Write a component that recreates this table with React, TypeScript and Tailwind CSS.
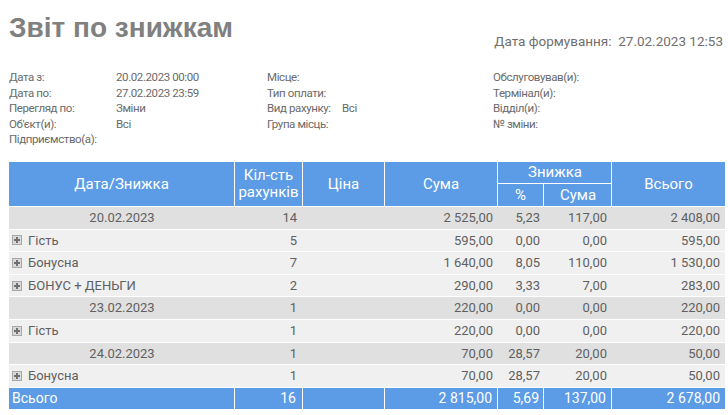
import React from "react";

const font = { fontFamily: "Roboto, 'Liberation Sans', sans-serif" };

function Plus() {
  return (
    <span className="inline-flex w-[10px] h-[10px] border border-[#a8a8a8] bg-[#d8d8d8] items-center justify-center mr-[6px] relative">
      <span className="absolute w-[6px] h-[2px] bg-[#707070]" />
      <span className="absolute w-[2px] h-[6px] bg-[#707070]" />
    </span>
  );
}

type Row = { g: boolean; name: string; n: string; s: string; p: string; d: string; t: string };

const rows: Row[] = [
  { g: true, name: "20.02.2023", n: "14", s: "2 525,00", p: "5,23", d: "117,00", t: "2 408,00" },
  { g: false, name: "Гість", n: "5", s: "595,00", p: "0,00", d: "0,00", t: "595,00" },
  { g: false, name: "Бонусна", n: "7", s: "1 640,00", p: "8,05", d: "110,00", t: "1 530,00" },
  { g: false, name: "БОНУС + ДЕНЬГИ", n: "2", s: "290,00", p: "3,33", d: "7,00", t: "283,00" },
  { g: true, name: "23.02.2023", n: "1", s: "220,00", p: "0,00", d: "0,00", t: "220,00" },
  { g: false, name: "Гість", n: "1", s: "220,00", p: "0,00", d: "0,00", t: "220,00" },
  { g: true, name: "24.02.2023", n: "1", s: "70,00", p: "28,57", d: "20,00", t: "50,00" },
  { g: false, name: "Бонусна", n: "1", s: "70,00", p: "28,57", d: "20,00", t: "50,00" },
];

const cols = "grid grid-cols-[226px_68px_82px_113px_46px_68px_113px]";

function Info({ l, v, lw }: { l: string; v?: string; lw: string }) {
  return (
    <div className="flex h-[15.5px] items-center">
      <span className={lw}>{l}</span>
      {v && <span>{v}</span>}
    </div>
  );
}

export default function App() {
  return (
    <div className="w-[728px] h-[415px] bg-white overflow-hidden relative" style={font}>
      <div className="flex justify-between items-end pl-[9px] pr-[5px] pt-[9px]">
        <div
          className="text-[28px] font-bold text-[#808080] leading-[38px]"
          style={{ fontFamily: "'Liberation Sans', Arial, sans-serif" }}
        >
          Звіт по знижкам
        </div>
        <div className="text-[13.5px] text-[#6f6f6f] leading-[18px] mb-[-3px]">
          Дата формування:&nbsp; 27.02.2023 12:53
        </div>
      </div>
      <div className="flex pl-[9px] pt-[23px] text-[11.5px] text-[#6a6a6a] tracking-[-0.4px] leading-[15.5px]">
        <div className="w-[258px]">
          <Info l="Дата з:" v="20.02.2023 00:00" lw="w-[107px]" />
          <Info l="Дата по:" v="27.02.2023 23:59" lw="w-[107px]" />
          <Info l="Перегляд по:" v="Зміни" lw="w-[107px]" />
          <Info l="Об'єкт(и):" v="Всі" lw="w-[107px]" />
          <Info l="Підприємство(а):" lw="w-[107px]" />
        </div>
        <div className="w-[226px]">
          <Info l="Місце:" lw="w-[75px]" />
          <Info l="Тип оплати:" lw="w-[75px]" />
          <Info l="Вид рахунку:" v="Всі" lw="w-[75px]" />
          <Info l="Група місць:" lw="w-[75px]" />
        </div>
        <div>
          <Info l="Обслуговував(и):" lw="" />
          <Info l="Термінал(и):" lw="" />
          <Info l="Відділ(и):" lw="" />
          <Info l="№ зміни:" lw="" />
        </div>
      </div>

      <div className="absolute left-[9px] top-[162px] w-[716px]">
        <div className={`${cols} h-[44px] bg-[#5c9be6] text-white text-[15px] leading-[17px]`}>
          <div className="flex items-center justify-center border-r border-white">Дата/Знижка</div>
          <div className="flex items-center justify-center border-r border-white text-center">Кіл-сть<br />рахунків</div>
          <div className="flex items-center justify-center border-r border-white">Ціна</div>
          <div className="flex items-center justify-center border-r border-white">Сума</div>
          <div className="col-span-2 grid grid-cols-[46px_68px] grid-rows-[22px_22px] border-r border-white">
            <div className="col-span-2 flex items-center justify-center border-b border-white">Знижка</div>
            <div className="flex items-center justify-center border-r border-white">%</div>
            <div className="flex items-center justify-center">Сума</div>
          </div>
          <div className="flex items-center justify-center">Всього</div>
        </div>
        {rows.map((r, i) => (
          <div
            key={i}
            className={`${cols} h-[22.6px] border-t border-[#ffffff] text-[13px] text-[#606060] ${r.g ? "bg-[#e0e0e0]" : "bg-[#f0f0f0]"}`}
          >
            {r.g ? (
              <div className="flex items-center justify-center">{r.name}</div>
            ) : (
              <div className="flex items-center pl-[3px]"><Plus />{r.name}</div>
            )}
            <div className="flex items-center justify-end pr-[6px]">{r.n}</div>
            <div />
            <div className="flex items-center justify-end pr-[5px]">{r.s}</div>
            <div className="flex items-center justify-end pr-[4px]">{r.p}</div>
            <div className="flex items-center justify-end pr-[5px]">{r.d}</div>
            <div className="flex items-center justify-end pr-[5px]">{r.t}</div>
          </div>
        ))}
        <div className={`${cols} h-[22px] border-t border-white bg-[#5c9be6] text-white text-[14px]`}>
          <div className="flex items-center pl-[3px] border-r border-white">Всього</div>
          <div className="flex items-center justify-end pr-[6px] border-r border-white">16</div>
          <div className="border-r border-white" />
          <div className="flex items-center justify-end pr-[5px] border-r border-white">2 815,00</div>
          <div className="flex items-center justify-end pr-[4px] border-r border-white">5,69</div>
          <div className="flex items-center justify-end pr-[5px] border-r border-white">137,00</div>
          <div className="flex items-center justify-end pr-[5px]">2 678,00</div>
        </div>
      </div>
    </div>
  );
}
